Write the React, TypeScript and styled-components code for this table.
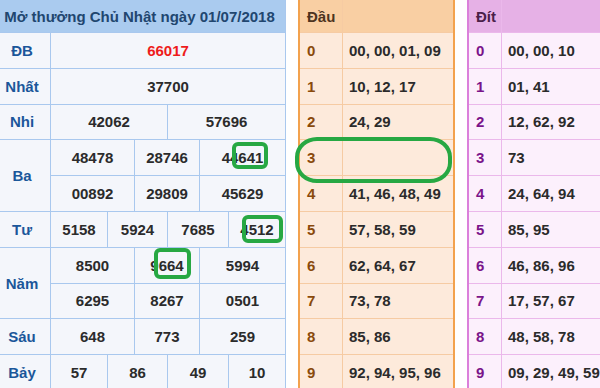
import React from "react";
import styled, { createGlobalStyle } from "styled-components";

const GlobalStyle = createGlobalStyle`
  html, body {
    margin: 0;
    padding: 0;
    background: #ffffff;
    overflow: hidden;
  }
  body {
    font-family: "Liberation Sans", Arial, sans-serif;
  }
`;

const ROWS = "32px repeat(10, 34.8px)";

const Page = styled.div`
  position: relative;
  width: 600px;
  height: 388px;
  overflow: hidden;
  display: flex;
  align-items: flex-start;
  gap: 12px;
`;

const ResultTable = styled.div`
  flex: none;
  margin-left: -6px;
  display: grid;
  grid-template-columns: 56px 56px 26px 32px 31px 28px 56px;
  grid-template-rows: ${ROWS};
  gap: 1px;
  background: #a9c8ee;
  border-right: 1px solid #a9c8ee;
`;

const Title = styled.div`
  grid-column: 1 / -1;
  grid-row: 1;
  display: flex;
  align-items: center;
  justify-content: center;
  background: #aacbef;
  color: #21466f;
  font-weight: bold;
  font-size: 15px;
  white-space: nowrap;
`;

const PrizeLabel = styled.div<{ $row: string }>`
  grid-column: 1;
  grid-row: ${(p) => p.$row};
  display: flex;
  align-items: center;
  justify-content: center;
  background: #f4f6fb;
  color: #1b569a;
  font-weight: bold;
  font-size: 15px;
`;

const Number = styled.div<{ $col: string; $row: number; $special?: boolean }>`
  grid-column: ${(p) => p.$col};
  grid-row: ${(p) => p.$row};
  display: flex;
  align-items: center;
  justify-content: center;
  background: #f4f6fb;
  color: ${(p) => (p.$special ? "#ee1c1c" : "#2b2b2b")};
  font-weight: bold;
  font-size: 15px;
`;

const LotoPanel = styled.div<{ $outer: string; $line: string; $first: number; $width: number }>`
  flex: none;
  width: ${(p) => p.$width}px;
  display: grid;
  grid-template-columns: ${(p) => p.$first}px 1fr;
  grid-template-rows: ${ROWS};
  gap: 1px;
  background: ${(p) => p.$line};
  border: 2px solid ${(p) => p.$outer};
  border-top: none;
  border-bottom: none;
`;

const PanelHead = styled.div<{ $bg: string; $color: string }>`
  display: flex;
  align-items: center;
  padding-left: 7px;
  background: ${(p) => p.$bg};
  color: ${(p) => p.$color};
  font-weight: bold;
  font-size: 15px;
`;

const Digit = styled.div<{ $bg: string; $color: string }>`
  display: flex;
  align-items: center;
  padding-left: 7px;
  background: ${(p) => p.$bg};
  color: ${(p) => p.$color};
  font-weight: bold;
  font-size: 15px;
`;

const Pairs = styled.div<{ $bg: string }>`
  display: flex;
  align-items: center;
  padding-left: 6px;
  background: ${(p) => p.$bg};
  color: #2b2b2b;
  font-weight: bold;
  font-size: 15px;
  white-space: nowrap;
`;

const Mark = styled.div<{ $radius: string }>`
  position: absolute;
  box-sizing: border-box;
  border: 4px solid #27a843;
  border-radius: ${(p) => p.$radius};
  pointer-events: none;
`;

type Cell = { v: string; c: string; special?: boolean };
type Prize = { label: string; lines: Cell[][] };

const THREE = ["2 / 4", "4 / 6", "6 / 8"];
const FOUR = ["2 / 3", "3 / 5", "5 / 7", "7 / 8"];
const cells = (vals: string[], cols: string[]): Cell[] =>
  vals.map((v, i) => ({ v, c: cols[i] }));

const prizes: Prize[] = [
  { label: "ĐB", lines: [[{ v: "66017", c: "2 / 8", special: true }]] },
  { label: "Nhất", lines: [[{ v: "37700", c: "2 / 8" }]] },
  { label: "Nhi", lines: [cells(["42062", "57696"], ["2 / 5", "5 / 8"])] },
  {
    label: "Ba",
    lines: [
      cells(["48478", "28746", "44641"], THREE),
      cells(["00892", "29809", "45629"], THREE),
    ],
  },
  { label: "Tư", lines: [cells(["5158", "5924", "7685", "4512"], FOUR)] },
  {
    label: "Năm",
    lines: [
      cells(["8500", "9664", "5994"], THREE),
      cells(["6295", "8267", "0501"], THREE),
    ],
  },
  { label: "Sáu", lines: [cells(["648", "773", "259"], THREE)] },
  { label: "Bảy", lines: [cells(["57", "86", "49", "10"], FOUR)] },
];

const dau = [
  "00, 00, 01, 09",
  "10, 12, 17",
  "24, 29",
  "",
  "41, 46, 48, 49",
  "57, 58, 59",
  "62, 64, 67",
  "73, 78",
  "85, 86",
  "92, 94, 95, 96",
];

const dit = [
  "00, 00, 10",
  "01, 41",
  "12, 62, 92",
  "73",
  "24, 64, 94",
  "85, 95",
  "46, 86, 96",
  "17, 57, 67",
  "48, 58, 78",
  "09, 29, 49, 59",
];

type PanelTheme = {
  outer: string;
  line: string;
  head: string;
  headText: string;
  body: string;
  digit: string;
};

const orange: PanelTheme = {
  outer: "#f3a24d",
  line: "#f6cba3",
  head: "#f9cfa3",
  headText: "#4d3420",
  body: "#fdeadb",
  digit: "#8a4a0c",
};

const pink: PanelTheme = {
  outer: "#db80db",
  line: "#ebb8eb",
  head: "#e6b1e6",
  headText: "#4a2048",
  body: "#fcf0fc",
  digit: "#7a148a",
};

function Loto({
  title,
  data,
  theme,
  first,
  width,
}: {
  title: string;
  data: string[];
  theme: PanelTheme;
  first: number;
  width: number;
}) {
  return (
    <LotoPanel $outer={theme.outer} $line={theme.line} $first={first} $width={width}>
      <PanelHead $bg={theme.head} $color={theme.headText}>
        {title}
      </PanelHead>
      <PanelHead $bg={theme.head} $color={theme.headText} />
      {data.map((d, i) => (
        <React.Fragment key={i}>
          <Digit $bg={theme.body} $color={theme.digit}>
            {i}
          </Digit>
          <Pairs $bg={theme.body}>{d}</Pairs>
        </React.Fragment>
      ))}
    </LotoPanel>
  );
}

export default function App() {
  let row = 2;
  const blocks = prizes.map((p) => {
    const start = row;
    const span = p.lines.length;
    row += span;
    return (
      <React.Fragment key={p.label}>
        <PrizeLabel $row={`${start} / span ${span}`}>{p.label}</PrizeLabel>
        {p.lines.map((line, li) =>
          line.map((c) => (
            <Number key={`${li}-${c.c}`} $col={c.c} $row={start + li} $special={c.special}>
              {c.v}
            </Number>
          ))
        )}
      </React.Fragment>
    );
  });

  return (
    <>
      <GlobalStyle />
      <Page>
        <ResultTable>
          <Title>Mở thưởng Chủ Nhật ngày 01/07/2018</Title>
          {blocks}
        </ResultTable>
        <Loto title="Đầu" data={dau} theme={orange} first={42} width={153} />
        <Loto title="Đít" data={dit} theme={pink} first={32} width={180} />
        <Mark $radius="6px" style={{ left: 232, top: 142, width: 36, height: 27 }} />
        <Mark $radius="6px" style={{ left: 242, top: 215, width: 41, height: 28 }} />
        <Mark $radius="6px" style={{ left: 154, top: 248, width: 37, height: 31 }} />
        <Mark $radius="22px / 20px" style={{ left: 295, top: 137, width: 157, height: 46 }} />
      </Page>
    </>
  );
}
